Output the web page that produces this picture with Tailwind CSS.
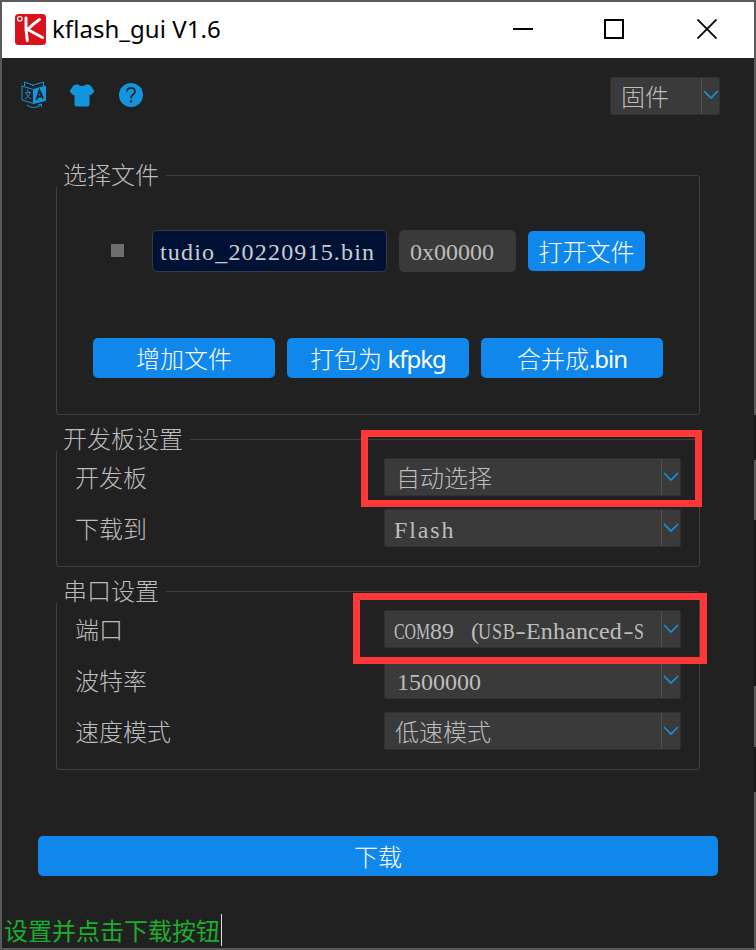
<!DOCTYPE html>
<html lang="zh-CN">
<head>
<meta charset="utf-8">
<title>kflash_gui V1.6</title>
<script src="https://cdn.jsdelivr.net/npm/@tailwindcss/browser@4"></script>
</head>
<body class="w-[756px] h-[950px] overflow-hidden bg-[#212121] font-['Liberation_Serif','Noto_Sans_CJK_SC',sans-serif] font-light text-[24px] leading-[36px] text-[#bdbdbd]">
<svg class="hidden"><symbol id="chev" viewBox="0 0 16 10"><path d="M1 1L8 8L15 1" fill="none" stroke="#1295dc" stroke-width="1.6"/></symbol></svg>
<div class="relative w-[756px] h-[950px] border-2 border-[#5a5a5a] flex flex-col whitespace-nowrap">
  <header class="h-[56px] bg-white text-black flex items-center pl-[13px] shrink-0">
    <svg class="w-[31px] h-[31px] mt-[-2px]" viewBox="0 0 31 31"><rect width="31" height="31" rx="3.5" fill="#d8121b"/><circle cx="4.800" cy="4.800" r="2.300" fill="none" stroke="#fff" stroke-width="1.2"/><path d="M11 4Q10.300 15 12.300 26.500M24.500 5.500Q18 10 12.500 15.500Q19 19 27.500 23.500" fill="none" stroke="#fff" stroke-width="2.900" stroke-linecap="round"/></svg>
    <h1 class="ml-[6px] mt-[-2px] w-[300px] font-['Noto_Sans',sans-serif] font-normal text-[24px] tracking-[0.05px]">kflash_gui V1.6</h1>
    <div class="ml-auto mr-[37px] mt-[-2px] flex">
      <svg class="w-5 h-5" viewBox="0 0 20 20"><path d="M0 10H20" stroke="#000" stroke-width="2"/></svg>
      <svg class="w-5 h-5 ml-[71px]" viewBox="0 0 20 20"><rect x="1" y="1" width="18" height="18" fill="none" stroke="#000" stroke-width="2"/></svg>
      <svg class="w-5 h-5 ml-[73px]" viewBox="0 0 20 20"><path d="M.5 .5L19.500 19.500M19.500 .5L.5 19.500" stroke="#000" stroke-width="1.800"/></svg>
    </div>
  </header>
  <nav class="h-[117px] flex items-start pt-[18px] pl-[19px] pr-[34px]">
    <svg class="w-[26px] h-[28px] mt-[5px]" viewBox="0 0 26 28" fill="none" stroke="#1295dc"><path d="M1 5L12.500 8.500V22.500L1 19Z" stroke-width="1"/><path d="M12.500 8.500L24.500 5V19.500L12.500 22.500Z" fill="#1295dc"/><path d="M3.500 5V1L13 4.500M11 4.500L22.500 1V5" stroke-width="1"/><path d="M4 12L10 11M6.500 8.500L7 11M9 12C8 15 6 17 4 17.500M5 12.500C6.500 15 8 16.500 10 18" stroke-width="1"/><path d="M15.500 19L18.500 9.500L22 17.500M16.500 16L21 15" stroke="#212121" stroke-width="1.900"/><path d="M6 24C10 27.500 17 27 20 23.500M17 24L20.500 23V26" stroke-width="1"/></svg>
    <svg class="w-[26px] h-[24px] ml-[22px] mt-[8px]" viewBox="0 0 26 24"><path d="M7 .5H9Q13 3.500 17 .5H19Q21 .5 22 2L25 6.500Q25.500 7.500 24.500 8.500L22.500 10.500Q21.500 11.500 20.500 10.500V20.500Q20.500 22.500 18.500 22.500H7.500Q5.500 22.500 5.500 20.500V10.500Q4.500 11.500 3.500 10.500L1.500 8.500Q.5 7.500 1 6.500L4 2Q5 .5 7 .5Z" fill="#1295dc"/></svg>
    <svg class="w-[24px] h-[24px] ml-[24px] mt-[7px]" viewBox="0 0 24 24"><circle cx="12" cy="12" r="12" fill="#1295dc"/><path d="M8 8.500Q8 5 12 5Q16 5 16 8.500Q16 10.500 13.500 12Q12 13 12 15.500" fill="none" stroke="#212121" stroke-width="1.700"/><circle cx="12" cy="18.500" r="1.200" fill="#212121"/></svg>
    <div class="ml-auto mt-px w-[110px] h-[38px] rounded-[2px] border border-[#303030] bg-[#3a3a3a] flex items-center"><span class="w-[90px] pl-[10px] pt-[3px]">固件</span><span class="border-l border-[#505050] h-full flex-1 flex items-center justify-center"><svg class="w-4 h-[10px] mt-[-2px]"><use href="#chev"/></svg></span></div>
  </nav>

  <main class="flex flex-col pl-[54px] pr-[54px]">
    <section class="relative h-[240px] border border-[#404040] rounded-[3px]">
      <h2 class="absolute left-[-2px] top-[-21px] w-[111px] h-[32px] bg-[#212121] pl-[8px] pt-[3px]">选择文件</h2>
      <div class="flex items-center pt-[54px] pl-[54px]">
        <div class="w-[13px] h-[13px] mt-[-2px] bg-[#6e6e6e]"></div>
        <div class="ml-[28px] w-[235px] h-[42px] rounded-[5px] border border-[#3a3a3a] bg-[#001136] text-[#cccccc] pl-[7px] pt-[3px] tracking-[1.18px]">tudio_20220915.bin</div>
        <div class="ml-[12px] w-[117px] h-[42px] rounded-[5px] bg-[#3a3a3a] pl-[11px] pt-[4px]">0x00000</div>
        <button class="ml-[12px] w-[117px] h-[40px] rounded-[5px] bg-[#0f87eb] text-white font-light pt-[4px]">打开文件</button>
      </div>
      <div class="flex gap-[12px] pl-[36px] mt-[66px] text-white font-['Noto_Sans','Noto_Sans_CJK_SC',sans-serif]">
        <button class="w-[182px] h-[40px] rounded-[5px] bg-[#0f87eb] font-['Noto_Sans_CJK_SC',sans-serif]">增加文件</button>
        <button class="w-[182px] h-[40px] rounded-[5px] bg-[#0f87eb] font-['Noto_Sans_CJK_SC',sans-serif]">打包为 <span class="font-['Noto_Sans'] font-normal tracking-[-1px]">kfpkg</span></button>
        <button class="w-[182px] h-[40px] rounded-[5px] bg-[#0f87eb] font-['Noto_Sans_CJK_SC',sans-serif]">合并成<span class="font-['Noto_Sans'] font-normal tracking-[-1px]">.bin</span></button>
      </div>
    </section>

    <section class="relative mt-[24px] h-[128px] border border-[#404040] rounded-[3px] pt-[18px] pl-[18px] pr-[18px] flex flex-col gap-[13px]">
      <h2 class="absolute left-[-2px] top-[-21px] w-[135px] h-[32px] bg-[#212121] pl-[8px] pt-[3px]">开发板设置</h2>
      <div class="flex justify-between h-[38px]"><span class="pt-[3px]">开发板</span>
        <div class="w-[297px] h-[38px] rounded-[2px] border border-[#303030] bg-[#3a3a3a] flex items-center"><span class="w-[276px] pl-[11px] pt-[4px]">自动选择</span><span class="border-l border-[#505050] h-full flex-1 flex items-center justify-center"><svg class="w-4 h-[10px]"><use href="#chev"/></svg></span></div></div>
      <div class="flex justify-between h-[38px]"><span class="pt-[3px]">下载到</span>
        <div class="w-[297px] h-[38px] rounded-[2px] border border-[#303030] bg-[#3a3a3a] flex items-center"><span class="w-[276px] pl-[9px] pt-[4px] tracking-[1.9px]">Flash</span><span class="border-l border-[#505050] h-full flex-1 flex items-center justify-center"><svg class="w-4 h-[10px]"><use href="#chev"/></svg></span></div></div>
      <div class="absolute left-[304px] top-[-10px] w-[341px] h-[77px] border-[7px] border-[#fc3838]"></div>
    </section>

    <section class="relative mt-[24px] h-[179px] border border-[#404040] rounded-[3px] pt-[18px] pl-[18px] pr-[18px] flex flex-col gap-[13px]">
      <h2 class="absolute left-[-2px] top-[-21px] w-[111px] h-[32px] bg-[#212121] pl-[8px] pt-[3px]">串口设置</h2>
      <div class="flex justify-between h-[38px]"><span class="pt-[3px]">端口</span>
        <div class="w-[297px] h-[38px] rounded-[2px] border border-[#303030] bg-[#3a3a3a] flex items-center"><span class="w-[276px] pl-[9px] pt-[4px] flex"><span class="w-[249px] overflow-hidden whitespace-pre flex"><span class="w-[36px] shrink-0 origin-left scale-x-[0.66]">COM</span><span class="w-[36px] shrink-0">89 </span><span class="w-[12px] shrink-0 pl-[5px]">(</span><span class="w-[48px] shrink-0 origin-left scale-x-[0.76] tracking-[1px]">USB</span><span class="w-[12px] shrink-0 ml-[-12px] pl-[1px] origin-left scale-x-[1.3]">-</span><span class="w-[96px] shrink-0 tracking-[0.16px]">Enhanced</span><span class="w-[12px] shrink-0 pl-[1px] origin-left scale-x-[1.3]">-</span><span class="w-[12px] shrink-0 origin-left scale-x-[0.75]">S</span></span></span><span class="border-l border-[#505050] h-full flex-1 flex items-center justify-center"><svg class="w-4 h-[10px]"><use href="#chev"/></svg></span></div></div>
      <div class="flex justify-between h-[38px]"><span class="pt-[3px]">波特率</span>
        <div class="w-[297px] h-[38px] rounded-[2px] border border-[#303030] bg-[#3a3a3a] flex items-center"><span class="w-[276px] pl-[12px] pt-[4px]">1500000</span><span class="border-l border-[#505050] h-full flex-1 flex items-center justify-center"><svg class="w-4 h-[10px]"><use href="#chev"/></svg></span></div></div>
      <div class="flex justify-between h-[38px]"><span class="pt-[3px]">速度模式</span>
        <div class="w-[297px] h-[38px] rounded-[2px] border border-[#303030] bg-[#3a3a3a] flex items-center"><span class="w-[276px] pl-[10px] pt-[4px]">低速模式</span><span class="border-l border-[#505050] h-full flex-1 flex items-center justify-center"><svg class="w-4 h-[10px]"><use href="#chev"/></svg></span></div></div>
      <div class="absolute left-[296px] top-[1px] w-[354px] h-[71px] border-[7px] border-[#fc3838]"></div>
    </section>
  </main>

  <button class="mt-[66px] mx-[36px] h-[40px] rounded-[5px] bg-[#0f87eb] text-white font-light pt-[3px] shrink-0">下载</button>
  <footer class="mt-[37px] pl-[2px] h-[34px] flex items-center text-[#1cad2c] font-['Noto_Sans_CJK_SC',sans-serif] font-normal"><span>设置并点击下载按钮</span><i class="w-px h-[32px] bg-[#dddddd] ml-px"></i></footer>

  <!-- dark stretches of the right window edge -->
  <i class="absolute right-[-2px] top-[413px] w-[2px] h-[45px] bg-[#191919]"></i>
  <i class="absolute right-[-2px] top-[518px] w-[2px] h-[166px] bg-[#191919]"></i>
  <i class="absolute right-[-2px] top-[745px] w-[2px] h-[45px] bg-[#191919]"></i>
</div>
</body>
</html>
